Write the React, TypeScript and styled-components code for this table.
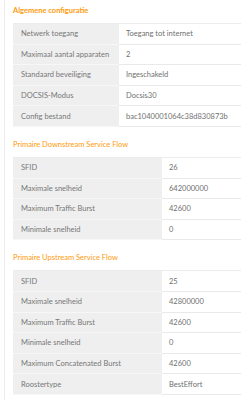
import styled, { createGlobalStyle } from "styled-components";

const GlobalStyle = createGlobalStyle`
  html, body {
    margin: 0;
    padding: 0;
    overflow: hidden;
    background: #fff;
  }
  body {
    font-family: Lato, "Open Sans", sans-serif;
  }
`;

interface Row {
  label: string;
  value: string;
}

interface Section {
  title: string;
  labelWidth: number;
  bold?: boolean;
  rows: Row[];
}

const sections: Section[] = [
  {
    title: "Algemene configuratie",
    labelWidth: 106,
    bold: true,
    rows: [
      { label: "Netwerk toegang", value: "Toegang tot internet" },
      { label: "Maximaal aantal apparaten", value: "2" },
      { label: "Standaard beveiliging", value: "Ingeschakeld" },
      { label: "DOCSIS-Modus", value: "Docsis30" },
      { label: "Config bestand", value: "bac1040001064c38d830873b" },
    ],
  },
  {
    title: "Primaire Downstream Service Flow",
    labelWidth: 149,
    rows: [
      { label: "SFID", value: "26" },
      { label: "Maximale snelheid", value: "642000000" },
      { label: "Maximum Traffic Burst", value: "42600" },
      { label: "Minimale snelheid", value: "0" },
    ],
  },
  {
    title: "Primaire Upstream Service Flow",
    labelWidth: 149,
    rows: [
      { label: "SFID", value: "25" },
      { label: "Maximale snelheid", value: "42800000" },
      { label: "Maximum Traffic Burst", value: "42600" },
      { label: "Minimale snelheid", value: "0" },
      { label: "Maximum Concatenated Burst", value: "42600" },
      { label: "Roostertype", value: "BestEffort" },
    ],
  },
];

const Panel = styled.div`
  margin-left: 4px;
  border-left: 1px solid #ececec;
  padding: 6px 0 0 8px;
  height: 400px;
  overflow: hidden;
  box-sizing: border-box;
  display: flex;
  flex-direction: column;
  gap: 13px;
`;

const Block = styled.section`
  display: flex;
  flex-direction: column;
`;

const Heading = styled.h3<{ $bold?: boolean }>`
  margin: 0 0 7px;
  height: 10px;
  line-height: 10px;
  font-size: 7.5px;
  font-weight: ${(p) => (p.$bold ? 700 : 400)};
  color: #ff9a0a;
  white-space: nowrap;
`;

const Table = styled.table`
  width: 300px;
  flex-shrink: 0;
  border-collapse: collapse;
  table-layout: fixed;
  border-top: 1px solid #ececec;
`;

const Label = styled.td`
  height: 19.6px;
  padding: 0 8px;
  background: #efefef;
  border-bottom: 1px solid #f7f7f7;
  color: #777;
  font-size: 7.5px;
  white-space: nowrap;
`;

const Value = styled.td`
  height: 19.6px;
  padding: 0 7px;
  background: #fff;
  border-bottom: 1px solid #e9e9e9;
  color: #707070;
  font-size: 7.5px;
  white-space: nowrap;
`;

export default function App() {
  return (
    <>
      <GlobalStyle />
      <Panel>
        {sections.map((s) => (
          <Block key={s.title}>
            <Heading $bold={s.bold}>{s.title}</Heading>
            <Table>
              <colgroup>
                <col style={{ width: s.labelWidth }} />
                <col />
              </colgroup>
              <tbody>
                {s.rows.map((r) => (
                  <tr key={r.label}>
                    <Label>{r.label}</Label>
                    <Value>{r.value}</Value>
                  </tr>
                ))}
              </tbody>
            </Table>
          </Block>
        ))}
      </Panel>
    </>
  );
}
